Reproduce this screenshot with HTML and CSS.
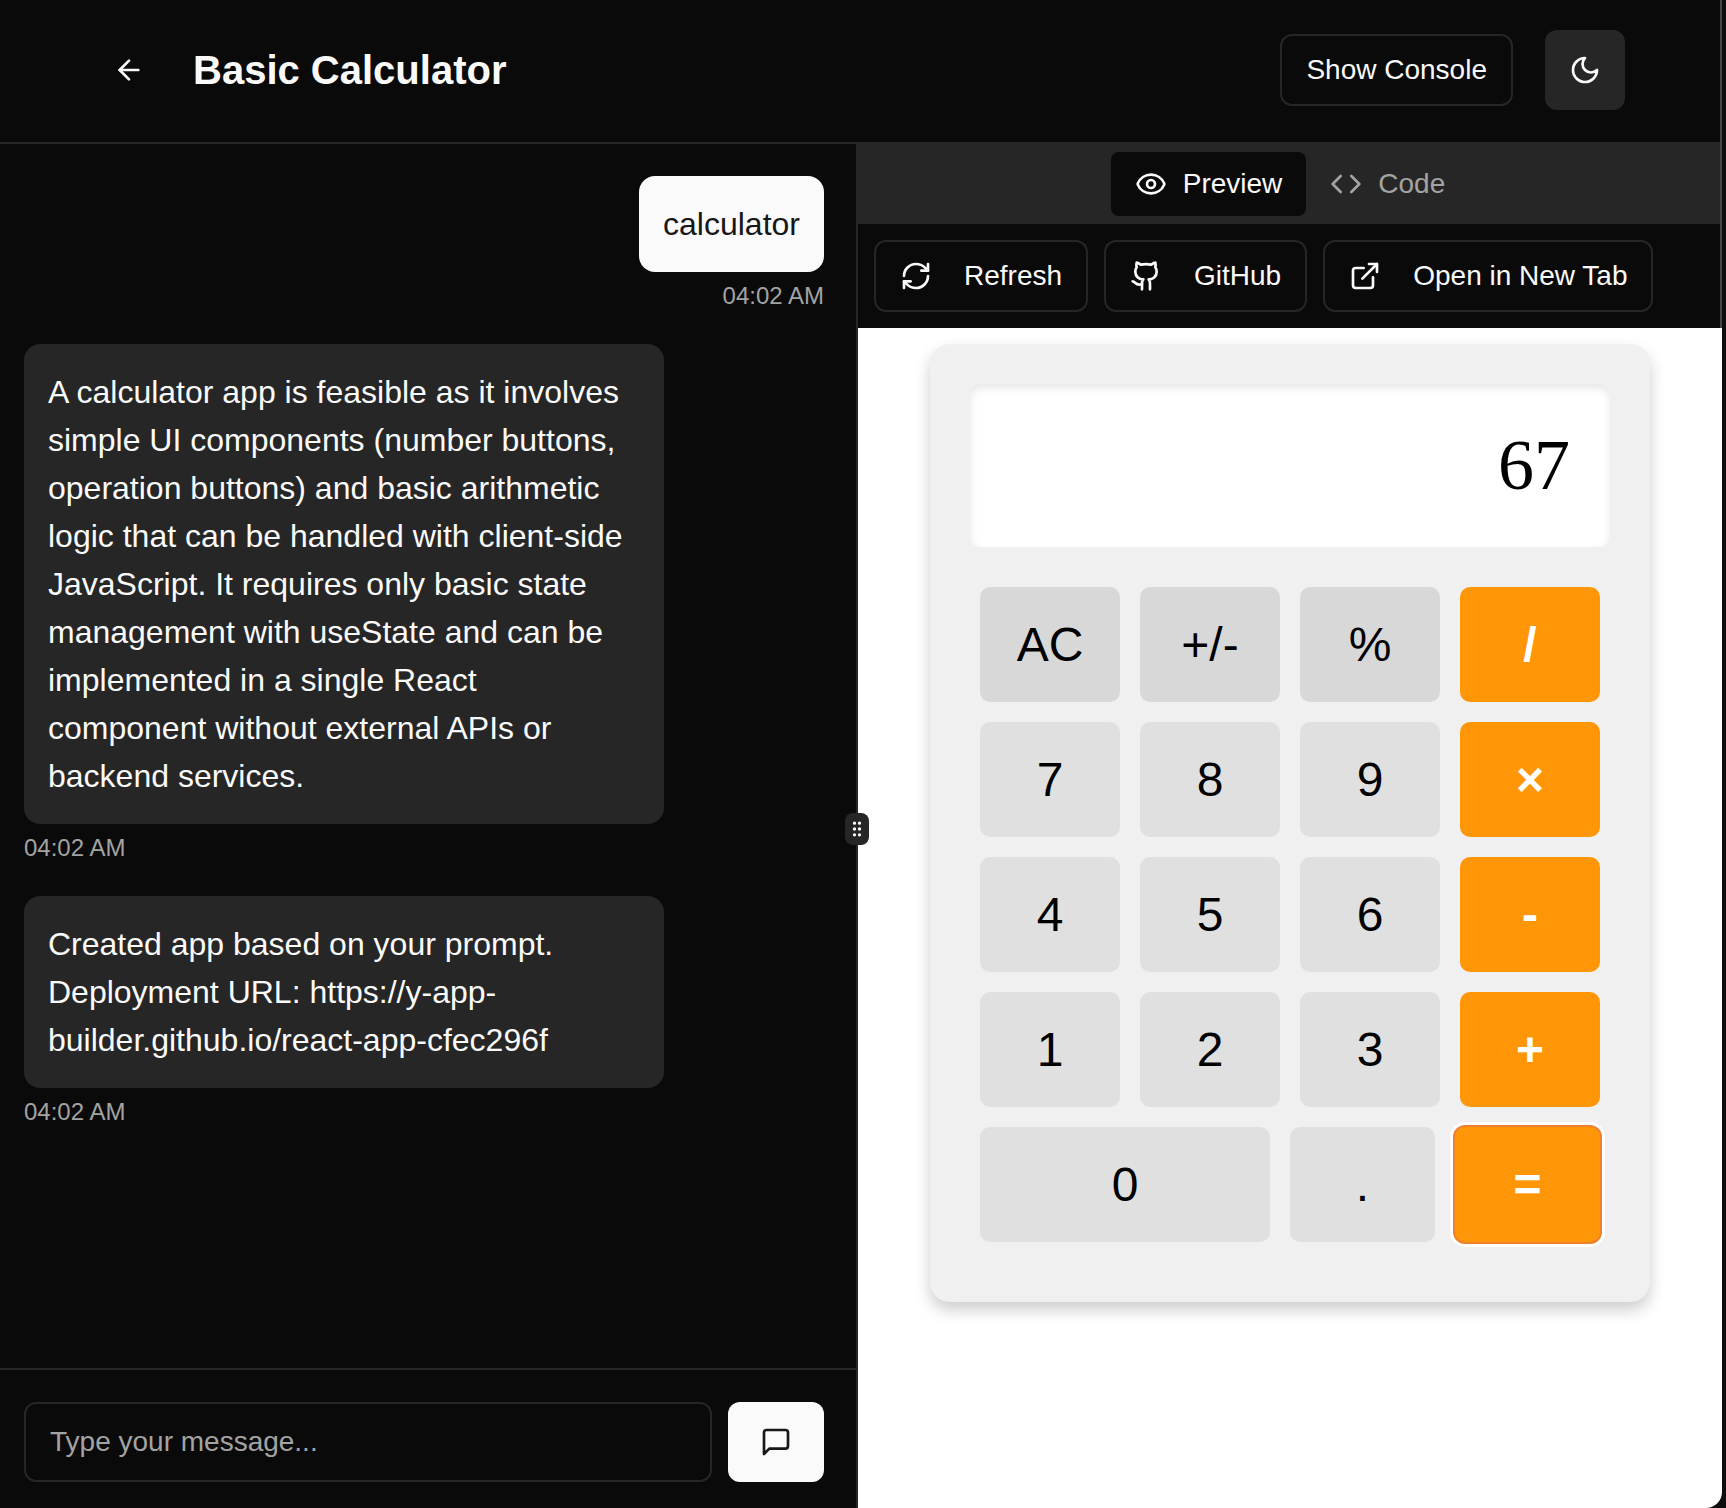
FILE: index.html
```html
<!DOCTYPE html>
<html lang="en">
<head>
<meta charset="utf-8">
<title>Basic Calculator</title>
<link rel="stylesheet" href="styles.css">
</head>
<body>
<div class="window">
  <header class="header">
    <div class="header-left">
      <button class="back" aria-label="Back"><svg class="icon" viewBox="0 0 24 24"><path d="m12 19-7-7 7-7"/><path d="M19 12H5"/></svg></button>
      <h1 class="title">Basic Calculator</h1>
    </div>
    <div class="header-right">
      <button class="btn">Show Console</button>
      <button class="theme" aria-label="Theme"><svg class="icon" viewBox="0 0 24 24"><path d="M12 3a6 6 0 0 0 9 9 9 9 0 1 1-9-9Z"/></svg></button>
    </div>
  </header>
  <main class="panels">
    <section class="chat">
      <div class="messages">
        <div class="message user"><div class="bubble">calculator</div><time class="time">04:02 AM</time></div>
        <div class="message"><div class="bubble">A calculator app is feasible as it involves simple UI components (number buttons, operation buttons) and basic arithmetic logic that can be handled with client-side JavaScript. It requires only basic state management with useState and can be implemented in a single React component without external APIs or backend services.</div><time class="time">04:02 AM</time></div>
        <div class="message"><div class="bubble">Created app based on your prompt. Deployment URL: https://y-app-builder.github.io/react-app-cfec296f</div><time class="time">04:02 AM</time></div>
      </div>
      <form class="composer">
        <input class="input" type="text" placeholder="Type your message...">
        <button class="send" type="button" aria-label="Send"><svg class="icon" viewBox="0 0 24 24"><path d="M21 15a2 2 0 0 1-2 2H7l-4 4V5a2 2 0 0 1 2-2h14a2 2 0 0 1 2 2z"/></svg></button>
      </form>
    </section>
    <div class="divider"><div class="handle"><svg class="grip" viewBox="0 0 24 24"><circle cx="9" cy="12" r="1"/><circle cx="9" cy="5" r="1"/><circle cx="9" cy="19" r="1"/><circle cx="15" cy="12" r="1"/><circle cx="15" cy="5" r="1"/><circle cx="15" cy="19" r="1"/></svg></div></div>
    <section class="preview">
      <div class="tabs">
        <button class="tab active"><svg class="icon" viewBox="0 0 24 24"><path d="M2.062 12.348a1 1 0 0 1 0-.696 10.75 10.75 0 0 1 19.876 0 1 1 0 0 1 0 .696 10.75 10.75 0 0 1-19.876 0"/><circle cx="12" cy="12" r="3"/></svg>Preview</button>
        <button class="tab"><svg class="icon" viewBox="0 0 24 24"><path d="m16 18 6-6-6-6"/><path d="m8 6-6 6 6 6"/></svg>Code</button>
      </div>
      <div class="toolbar">
        <button class="btn"><svg class="icon" viewBox="0 0 24 24"><path d="M3 12a9 9 0 0 1 9-9 9.75 9.75 0 0 1 6.74 2.74L21 8"/><path d="M21 3v5h-5"/><path d="M21 12a9 9 0 0 1-9 9 9.75 9.75 0 0 1-6.74-2.74L3 16"/><path d="M8 16H3v5"/></svg>Refresh</button>
        <button class="btn"><svg class="icon" viewBox="0 0 24 24"><path d="M15 22v-4a4.800 4.800 0 0 0-1-3.500c3 0 6-2 6-5.500.08-1.250-.27-2.480-1-3.500.28-1.150.28-2.350 0-3.500 0 0-1 0-3 1.500-2.640-.5-5.360-.5-8 0C6 2 5 2 5 2c-.3 1.150-.3 2.350 0 3.500A5.403 5.403 0 0 0 4 9c0 3.500 3 5.500 6 5.500-.39.490-.68 1.050-.85 1.650-.17.6-.22 1.230-.15 1.850v4"/><path d="M9 18c-4.510 2-5-2-7-2"/></svg>GitHub</button>
        <button class="btn"><svg class="icon" viewBox="0 0 24 24"><path d="M15 3h6v6"/><path d="M10 14 21 3"/><path d="M18 13v6a2 2 0 0 1-2 2H5a2 2 0 0 1-2-2V8a2 2 0 0 1 2-2h6"/></svg>Open in New Tab</button>
      </div>
      <div class="stage">
        <div class="calculator">
          <div class="display">67</div>
          <div class="keys">
            <div class="row"><button class="key fn">AC</button><button class="key fn">+/-</button><button class="key fn">%</button><button class="key op">/</button></div>
            <div class="row"><button class="key">7</button><button class="key">8</button><button class="key">9</button><button class="key op">×</button></div>
            <div class="row"><button class="key">4</button><button class="key">5</button><button class="key">6</button><button class="key op">-</button></div>
            <div class="row"><button class="key">1</button><button class="key">2</button><button class="key">3</button><button class="key op">+</button></div>
            <div class="row last"><button class="key">0</button><button class="key">.</button><button class="key op focused">=</button></div>
          </div>
        </div>
      </div>
    </section>
  </main>
</div>
</body>
</html>
```
FILE: styles.css
```css
* { box-sizing: border-box; }
body { margin: 0; background: #0e0e0e; font-family: "Liberation Sans", Arial, sans-serif; color: #fafafa; overflow: hidden; }
button { font-family: inherit; color: inherit; border: 0; background: none; padding: 0; margin: 0; }
.window { position: relative; display: flex; flex-direction: column; width: 1722px; height: 1508px; background: #0a0a0a; border-bottom-right-radius: 16px; overflow: hidden; }
.window::after { content: ""; position: absolute; top: 0; right: 0; width: 2px; height: 328px; background: #484848; }
.icon { width: 32px; height: 32px; flex: none; fill: none; stroke: currentColor; stroke-width: 2; stroke-linecap: round; stroke-linejoin: round; }

.header { display: flex; align-items: center; justify-content: space-between; flex: none; height: 144px; padding: 0 97px 2px 89px; border-bottom: 2px solid #262626; }
.header-left { display: flex; align-items: center; gap: 24px; }
.header-right { display: flex; align-items: center; gap: 32px; }
.back, .theme { display: flex; align-items: center; justify-content: center; width: 80px; height: 80px; border-radius: 12px; }
.theme { background: #262626; }
.title { margin: 0; font-size: 40px; line-height: 56px; font-weight: 700; }
.btn { display: flex; align-items: center; gap: 32px; height: 72px; padding: 0 24px; border: 2px solid #262626; border-radius: 12px; font-size: 28px; white-space: nowrap; }

.panels { display: flex; flex: 1; min-height: 0; }
.chat { display: flex; flex-direction: column; width: 856px; }
.messages { display: flex; flex-direction: column; flex: 1; gap: 32px; padding: 32px 32px 0 24px; }
.message { display: flex; flex-direction: column; align-items: flex-start; gap: 8px; }
.message.user { align-items: flex-end; }
.bubble { max-width: 640px; padding: 24px; border-radius: 16px; background: #262626; font-size: 32px; line-height: 48px; }
.user .bubble { background: #fafafa; color: #171717; }
.time { font-size: 24px; line-height: 32px; color: #a3a3a3; }
.composer { display: flex; gap: 16px; padding: 32px 32px 26px 24px; border-top: 2px solid #262626; }
.input { flex: 1; min-width: 0; height: 80px; padding: 0 24px; border: 2px solid #262626; border-radius: 12px; background: transparent; color: #fafafa; font: 28px "Liberation Sans", Arial, sans-serif; }
.input::placeholder { color: #a3a3a3; opacity: 1; }
.send { display: flex; align-items: center; justify-content: center; width: 96px; height: 80px; border-radius: 12px; background: #fafafa; color: #171717; }

.divider { display: flex; align-items: center; justify-content: center; width: 2px; padding-top: 6px; background: #262626; z-index: 1; }
.handle { display: flex; align-items: center; justify-content: center; flex: none; width: 24px; height: 32px; border-radius: 8px; background: #262626; }
.grip { width: 20px; height: 20px; flex: none; fill: #fafafa; stroke: #fafafa; stroke-width: 2; }

.preview { display: flex; flex-direction: column; flex: 1; min-width: 0; }
.tabs { display: flex; justify-content: center; flex: none; height: 80px; padding: 8px; background: #262626; }
.tab { display: flex; align-items: center; gap: 16px; padding: 0 24px; border-radius: 8px; font-size: 28px; color: #a3a3a3; }
.tab.active { background: #0a0a0a; color: #fafafa; }
.toolbar { display: flex; gap: 16px; flex: none; padding: 16px; }
.stage { flex: 1; padding: 16px 72px; background: #fff; color: #000; }
.calculator { height: 958px; padding: 40px; border-radius: 20px; background: #f0f0f0; box-shadow: 0 8px 16px rgba(0,0,0,.2); }
.display { height: 163px; padding: 40px; border-radius: 10px; background: #fff; box-shadow: inset 0 4px 8px rgba(0,0,0,.1); font: 72px/83px "Liberation Serif", "Times New Roman", serif; text-align: right; }
.keys { display: grid; gap: 20px; margin: 40px 10px 0; }
.row { display: grid; grid-template-columns: repeat(4, 1fr); gap: 20px; }
.row.last { grid-template-columns: 2fr 1fr 1fr; }
.key { height: 115px; border-radius: 10px; background: #e0e0e0; font-size: 48px; line-height: 55px; }
.key.fn { background: #d8d8d8; }
.key.op { background: #ff9607; color: #fff; font-weight: 700; }
.key.focused { box-shadow: 0 0 0 2px #f08030, 0 0 0 5px #fff; }
```
